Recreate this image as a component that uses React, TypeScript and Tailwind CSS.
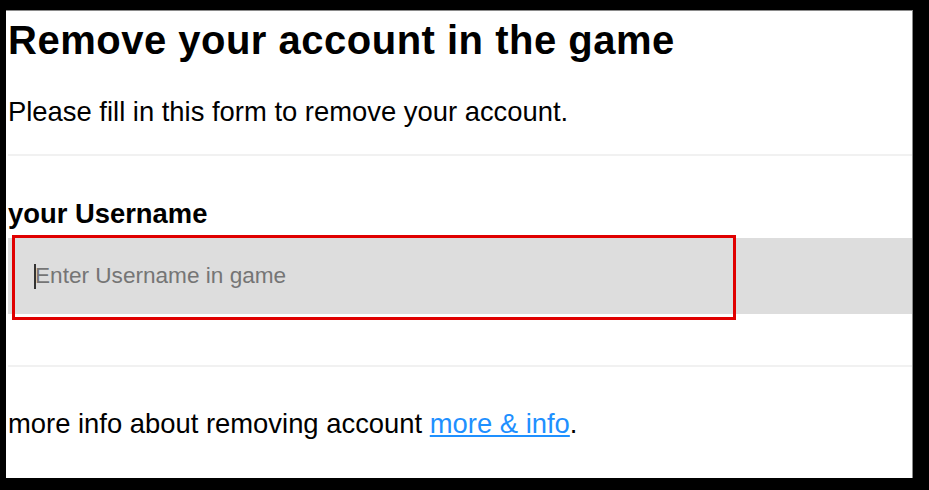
import React from "react";

const RemoveAccount = () => {
  return (
    <div className="w-[929px] h-[490px] bg-black pl-[6px] pt-[10px] font-['Liberation_Sans',Arial,sans-serif]">
      <div className="w-[907px] h-[468px] bg-white border-t border-r border-[#8a8a8a] pl-[2px] flex flex-col">
        <h1 className="text-[40px] tracking-[0.5px] font-bold text-black leading-none mt-[9px] whitespace-nowrap">
          Remove your account in the game
        </h1>
        <p className="text-[27.4px] text-black leading-none mt-[38px] whitespace-nowrap">
          Please fill in this form to remove your account.
        </p>
        <hr className="border-0 h-[2px] bg-[#f1f1f1] mt-[29px]" />
        <label className="text-[27.4px] font-bold text-black leading-none mt-[44px]">
          your Username
        </label>
        <div className="relative mt-[10px]">
          <input
            placeholder="Enter Username in game"
            className="w-full h-[76px] bg-[#dddddd] pl-[27px] text-[22.6px] text-black placeholder:text-[#757575] outline-none"
          />
          <div className="absolute left-[26px] top-[26px] w-[2px] h-[25px] bg-[#333] pointer-events-none" />
          <div className="absolute left-[4px] top-[-3px] w-[724px] h-[85px] border-[3px] border-[#e00000] pointer-events-none" />
        </div>
        <hr className="border-0 h-[2px] bg-[#f1f1f1] mt-[51px]" />
        <p className="text-[27.4px] text-black leading-none mt-[43px] whitespace-nowrap">
          more info about removing account{" "}
          <a href="#" className="text-[#1e90ff] underline">
            more &amp; info
          </a>
          .
        </p>
      </div>
    </div>
  );
};

export default function App() {
  return <RemoveAccount />;
}
